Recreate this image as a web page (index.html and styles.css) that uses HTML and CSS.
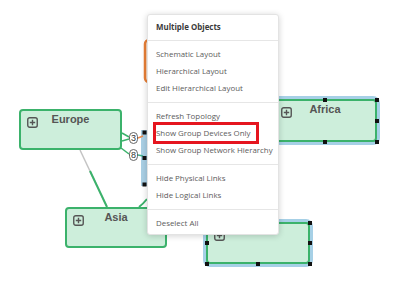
FILE: index.html
```html
<!DOCTYPE html>
<html lang="en">
<head>
<meta charset="UTF-8" />
<title>Topology</title>
<link rel="stylesheet" href="styles.css">
</head>
<body>

<div class="canvas">

  <!-- links -->
  <svg class="links" width="396" height="283" viewBox="0 0 396 283">
    <rect class="hidden-orange" x="145" y="40" width="60" height="42" rx="4" />
    <rect class="hidden-sel" x="141" y="130" width="30" height="56" />
    <line x1="80" y1="150" x2="107" y2="207" stroke="#c4c4c4" stroke-width="1.5" />
    <line x1="90" y1="171" x2="107" y2="207" stroke="#3bb26b" stroke-width="2" />
    <line x1="122" y1="133" x2="129" y2="137" stroke="#3bb26b" stroke-width="1.5" />
    <line x1="122" y1="141" x2="129" y2="139" stroke="#3bb26b" stroke-width="1.5" />
    <line x1="121" y1="148" x2="129" y2="154" stroke="#3bb26b" stroke-width="1.5" />
    <line x1="138" y1="138" x2="143" y2="136" stroke="#ee8a4a" stroke-width="1.5" />
    <line x1="138" y1="155" x2="143" y2="156" stroke="#3fae8a" stroke-width="1.5" />
    <path d="M139 207 Q143 204 147 199" fill="none" stroke="#3bb26b" stroke-width="2" />
    <rect x="142.5" y="130.5" width="4" height="4" fill="#111" />
    <rect x="142.5" y="156" width="4" height="4" fill="#111" />
    <rect x="142.5" y="182.5" width="4" height="4" fill="#111" />
  </svg>

  <span class="badge badge-a">3</span>
  <span class="badge badge-b">8</span>

  <!-- nodes -->
  <div class="node node-europe">
    <span class="expand">
      <svg width="11" height="11" viewBox="0 0 11 11"><rect x="0.75" y="0.75" width="9.5" height="9.5" rx="2" fill="none" stroke="#555" stroke-width="1.4"/><path d="M5.5 2.8v5.4M2.8 5.5h5.4" stroke="#555" stroke-width="1.4"/></svg>
    </span>
    <div class="label">Europe</div>
  </div>

  <div class="node node-asia">
    <span class="expand">
      <svg width="11" height="11" viewBox="0 0 11 11"><rect x="0.75" y="0.75" width="9.5" height="9.5" rx="2" fill="none" stroke="#555" stroke-width="1.4"/><path d="M5.5 2.8v5.4M2.8 5.5h5.4" stroke="#555" stroke-width="1.4"/></svg>
    </span>
    <div class="label">Asia</div>
  </div>

  <div class="node node-africa selected">
    <span class="expand">
      <svg width="11" height="11" viewBox="0 0 11 11"><rect x="0.75" y="0.75" width="9.5" height="9.5" rx="2" fill="none" stroke="#555" stroke-width="1.4"/><path d="M5.5 2.8v5.4M2.8 5.5h5.4" stroke="#555" stroke-width="1.4"/></svg>
    </span>
    <div class="label">Africa</div>
    <i class="handle tl"></i><i class="handle tm"></i><i class="handle tr"></i>
    <i class="handle ml"></i><i class="handle mr"></i>
    <i class="handle bl"></i><i class="handle bm"></i><i class="handle br"></i>
  </div>

  <div class="node node-other selected">
    <span class="expand">
      <svg width="11" height="11" viewBox="0 0 11 11"><rect x="0.75" y="0.75" width="9.5" height="9.5" rx="2" fill="none" stroke="#555" stroke-width="1.4"/><path d="M5.5 2.8v5.4M2.8 5.5h5.4" stroke="#555" stroke-width="1.4"/></svg>
    </span>
    <div class="label"></div>
    <i class="handle tl"></i><i class="handle tm"></i><i class="handle tr"></i>
    <i class="handle ml"></i><i class="handle mr"></i>
    <i class="handle bl"></i><i class="handle bm"></i><i class="handle br"></i>
  </div>

  <!-- context menu -->
  <div class="menu">
    <div class="menu-title">Multiple Objects</div>
    <ul class="menu-group">
      <li>Schematic Layout</li>
      <li>Hierarchical Layout</li>
      <li>Edit Hierarchical Layout</li>
    </ul>
    <ul class="menu-group">
      <li>Refresh Topology</li>
      <li><span class="marked">Show Group Devices Only</span></li>
      <li>Show Group Network Hierarchy</li>
    </ul>
    <ul class="menu-group">
      <li>Hide Physical Links</li>
      <li>Hide Logical Links</li>
    </ul>
    <ul class="menu-group last">
      <li>Deselect All</li>
    </ul>
  </div>

</div>

</body>
</html>
```

FILE: styles.css
```css
body {
  margin: 0;
  background: #fff;
  font-family: "Open Sans", "Liberation Sans", sans-serif;
}

.canvas {
  position: relative;
  width: 396px;
  height: 283px;
  overflow: hidden;
  background: #fff;
}

.links {
  position: absolute;
  left: 0;
  top: 0;
}
.hidden-orange {
  fill: #fdeee2;
  stroke: #e97f36;
  stroke-width: 2.5;
}
.hidden-sel {
  fill: #a9cfe4;
}

/* link counters */
.badge {
  position: absolute;
  width: 9px;
  height: 12px;
  box-sizing: border-box;
  border: 1px solid #666;
  border-radius: 5px;
  background: #fff;
  font: 9px/10px "Liberation Sans", sans-serif;
  color: #333;
  text-align: center;
}
.badge-a { left: 129px; top: 132px; }
.badge-b { left: 129px; top: 149px; }

/* group nodes */
.node {
  position: absolute;
  box-sizing: border-box;
  width: 104px;
  height: 42px;
  border: 2.5px solid #3bb26b;
  border-radius: 4px;
  background: #cdeedb;
}
.node-europe { left: 19px; top: 109px; width: 103px; height: 41px; }
.node-asia { left: 65px; top: 207px; width: 102px; height: 41px; }
.node-africa { left: 273px; top: 99px; height: 43px; }
.node-other { left: 206px; top: 222px; }

.node .label {
  padding-top: 1px;
  font: bold 11px/14px "Liberation Sans", Arial, sans-serif;
  color: #555;
  text-align: center;
}
.node .expand {
  position: absolute;
  left: 6px;
  top: 6px;
  width: 11px;
  height: 11px;
}
.node .expand svg {
  display: block;
}

.node.selected {
  box-shadow: 0 0 0 3px #a6d0e6;
}
.handle {
  position: absolute;
  width: 4px;
  height: 4px;
  background: #111;
}
.handle.tl, .handle.tm, .handle.tr { top: -3.5px; }
.handle.ml, .handle.mr { top: calc(50% - 2px); }
.handle.bl, .handle.bm, .handle.br { bottom: -3.5px; }
.handle.tl, .handle.ml, .handle.bl { left: -3.5px; }
.handle.tm, .handle.bm { left: calc(50% - 2px); }
.handle.tr, .handle.mr, .handle.br { right: -3.5px; }

/* context menu */
.menu {
  position: absolute;
  left: 147px;
  top: 14px;
  width: 132px;
  box-sizing: border-box;
  background: #fff;
  border: 1px solid #e3e3e3;
  border-radius: 3px;
  box-shadow: 0 1px 6px rgba(0,0,0,0.18);
  font-size: 7.9px;
  color: #5c5c5c;
  z-index: 10;
}
.menu-title {
  padding: 7px 8px;
  line-height: 11px;
  font-weight: bold;
  color: #3a3a3a;
  border-bottom: 1px solid #e6e6e6;
}
.menu-group {
  list-style: none;
  margin: 0;
  padding: 5px 0;
  border-bottom: 1px solid #e6e6e6;
}
.menu-group.last {
  border-bottom: none;
  padding-bottom: 2px;
}
.menu-group li {
  height: 17px;
  line-height: 17px;
  padding: 0 8px;
  white-space: nowrap;
}
.marked {
  display: inline-block;
  line-height: 16px;
  padding-right: 5px;
  outline: 3px solid #e5151f;
}
```
